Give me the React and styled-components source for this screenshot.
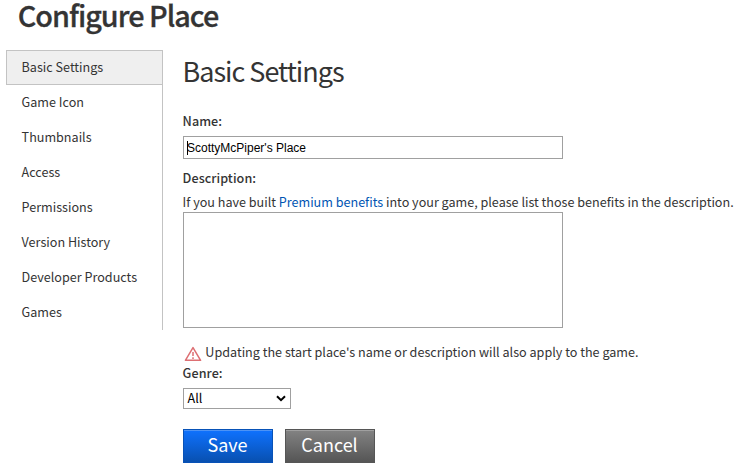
import React from "react";
import styled, { createGlobalStyle } from "styled-components";

const GlobalStyle = createGlobalStyle`
  *, *::before, *::after { box-sizing: border-box; }
  body {
    margin: 0;
    background: #fff;
    color: #343434;
    font-family: "Noto Sans CJK SC", "Noto Sans", sans-serif;
    font-size: 12.6px;
    line-height: 20px;
  }
`;

const Page = styled.div`
  width: 743px;
  height: 474px;
  padding-left: 6px;
  white-space: nowrap;
`;

const PageTitle = styled.h1`
  margin: 0;
  padding-left: 11.7px;
  height: 50px;
  font-size: 28.8px;
  font-weight: 500;
  line-height: 30px;
  letter-spacing: -1px;
  -webkit-text-stroke: 0.3px #343434;
`;

const Columns = styled.div`
  display: flex;
  align-items: flex-start;
  gap: 20px;
`;

const Tabs = styled.nav`
  display: flex;
  flex-direction: column;
  width: 157px;
  height: 280px;
  border-right: 1px solid #c3c3c3;
`;

const Tab = styled.a`
  flex: 0 0 35px;
  padding: 0 0 0 14.6px;
  line-height: 32px;
  border: 1px solid ${(p) => (p.$active ? "#c3c3c3" : "transparent")};
  border-right: 0;
  background: ${(p) => (p.$active ? "#efefef" : "transparent")};
`;

const Main = styled.main`
  display: flex;
  flex-direction: column;
  align-items: flex-start;
`;

const SectionTitle = styled.h2`
  margin: 0 0 16px -0.5px;
  height: 45px;
  font-size: 27px;
  font-weight: 400;
  line-height: 42px;
  letter-spacing: -1px;
`;

const Label = styled.label`
  height: ${(p) => p.$height}px;
  margin-left: -0.4px;
  font-weight: 500;
  letter-spacing: 0.05px;
`;

const NameField = styled.div`
  display: flex;
  align-items: center;
  width: 380px;
  height: 23px;
  margin-bottom: 9px;
  padding-left: 3px;
  border: 1px solid #a0a0a0;
  color: #000;
  font: 12px/21px "Liberation Sans", Arial, sans-serif;
`;

const Caret = styled.span`
  width: 1px;
  height: 14px;
  margin-right: -1px;
  background: #000;
`;

const Value = styled.span`
  padding-top: 1px;
`;

const Hint = styled.p`
  margin: 0 0 0 -0.4px;
  height: 20px;
  letter-spacing: -0.005px;
`;

const Link = styled.a`
  color: #0055b3;
`;

const Description = styled.textarea`
  display: block;
  width: 380px;
  height: 116px;
  margin: 0 0 14px;
  border: 1px solid #a0a0a0;
  border-radius: 0;
  resize: none;
  outline: none;
`;

const Notice = styled.p`
  display: flex;
  gap: 3.3px;
  margin: 0;
  height: 21px;
`;

const WarningIcon = styled.svg`
  width: 18px;
  height: 16px;
  margin: 4px 0 0 1px;
`;

const GenreSelect = styled.div`
  display: flex;
  align-items: center;
  justify-content: space-between;
  width: 108px;
  height: 21px;
  padding: 0 4px 0 3.5px;
  margin-bottom: 20px;
  border: 1px solid #a0a0a0;
  color: #000;
`;

const Selected = styled.span`
  font-size: 12.6px;
  line-height: 17px;
  padding-bottom: 2px;
`;

const Actions = styled.div`
  display: flex;
  gap: 12px;
`;

const Button = styled.button`
  width: 90px;
  height: 34px;
  padding: 0 1px 4px 0;
  border: 1px solid ${(p) => (p.$primary ? "#0852b7" : "#565656")};
  border-radius: 0;
  background: ${(p) =>
    p.$primary
      ? "linear-gradient(#0f72ff, #0850b0)"
      : "linear-gradient(#838383, #555)"};
  box-shadow: inset 0 1px 0 ${(p) => (p.$primary ? "#4d93f5" : "#a0a0a0")};
  color: #fff;
  font: 400 18px/28px "Noto Sans CJK SC", "Noto Sans", sans-serif;
`;

const tabs = [
  "Basic Settings",
  "Game Icon",
  "Thumbnails",
  "Access",
  "Permissions",
  "Version History",
  "Developer Products",
  "Games",
];

export default function App() {
  return (
    <>
      <GlobalStyle />
      <Page>
        <PageTitle>Configure Place</PageTitle>
        <Columns>
          <Tabs>
            {tabs.map((name, i) => (
              <Tab key={name} $active={i === 0}>
                {name}
              </Tab>
            ))}
          </Tabs>
          <Main>
            <SectionTitle>Basic Settings</SectionTitle>
            <Label $height={25}>Name:</Label>
            <NameField>
              <Caret />
              <Value>ScottyMcPiper's Place</Value>
            </NameField>
            <Label $height={24}>Description:</Label>
            <Hint>
              If you have built <Link>Premium benefits</Link> into your game,
              please list those benefits in the description.
            </Hint>
            <Description aria-label="Description" />
            <Notice>
              <WarningIcon viewBox="0 0 18 16" fill="none">
                <path
                  d="M9 1.6 L16.6 14.3 H1.4 Z"
                  stroke="#dd6f73"
                  strokeWidth="1.5"
                  strokeLinejoin="round"
                />
                <path d="M9 6v4M9 11.3v1.6" stroke="#dd6f73" strokeWidth="1.5" />
              </WarningIcon>
              Updating the start place's name or description will also apply to
              the game.
            </Notice>
            <Label $height={25}>Genre:</Label>
            <GenreSelect>
              <Selected>All</Selected>
              <svg width="10" height="7" viewBox="0 0 10 7" fill="none">
                <path d="M1 1.2 5 5.2 9 1.2" stroke="#000" strokeWidth="2" />
              </svg>
            </GenreSelect>
            <Actions>
              <Button $primary>Save</Button>
              <Button>Cancel</Button>
            </Actions>
          </Main>
        </Columns>
      </Page>
    </>
  );
}
